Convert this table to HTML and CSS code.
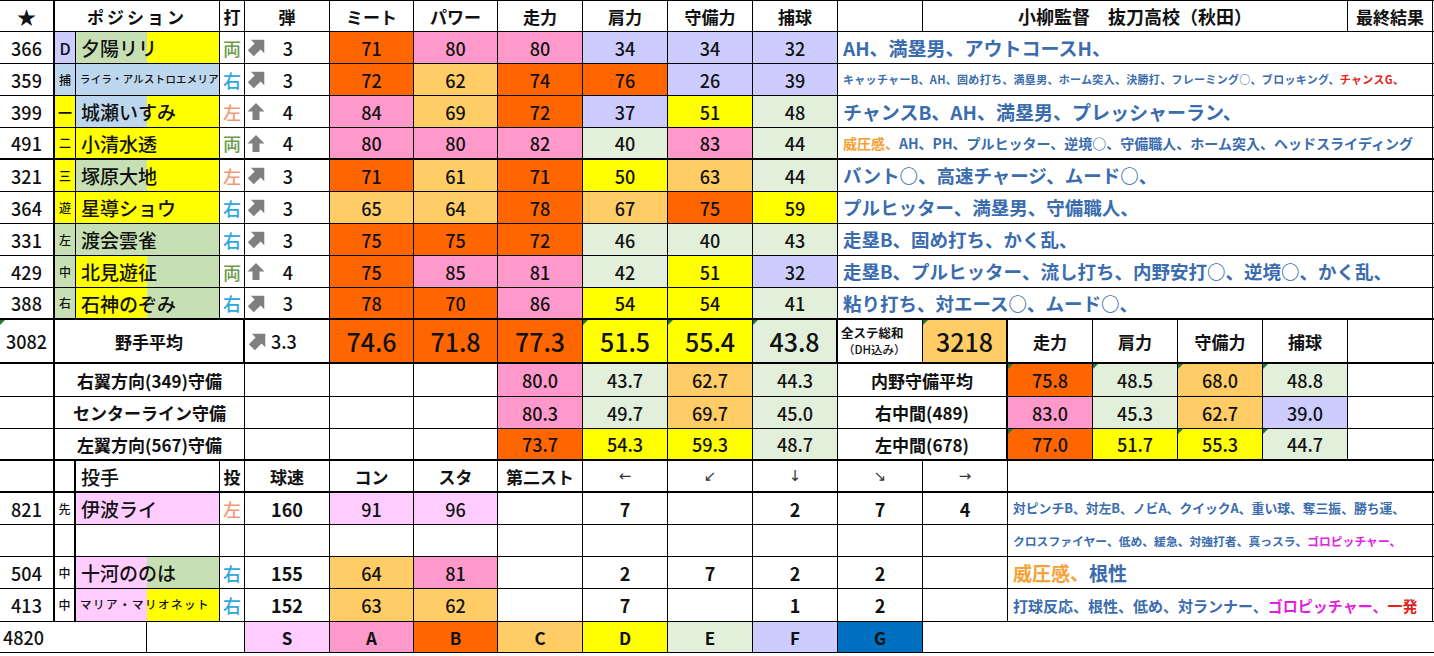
FILE: index.html
```html
<!DOCTYPE html>
<html lang="ja">
<head>
<meta charset="utf-8">
<title>小柳監督 抜刀高校（秋田）</title>
<link rel="stylesheet" href="styles.css">
</head>
<body>
<div class="tbl">
  <!-- header -->
  <div class="r hd">
    <div class="c k1 h star">★</div>
    <div class="c s3 h sp">ポジション</div>
    <div class="c h">打</div>
    <div class="c h">弾</div>
    <div class="c h">ミート</div>
    <div class="c h">パワー</div>
    <div class="c h">走力</div>
    <div class="c h">肩力</div>
    <div class="c h">守備力</div>
    <div class="c h">捕球</div>
    <div class="c"></div>
    <div class="c s5 h title">小柳監督　抜刀高校（秋田）</div>
    <div class="c h">最終結果</div>
  </div>

  <div class="r">
    <div class="c k1 no">366</div>
    <div class="c bf ps pl">D</div>
    <div class="c s2 nm n-gy">夕陽リリ</div>
    <div class="c da ryo">両</div>
    <div class="c dan"><svg class="ar" viewBox="0 2 18 18"><path d="M10 1 L19 10 L14 10 L14 19 L6 19 L6 10 L1 10 Z" transform="rotate(45 10 10)"/></svg><span>3</span></div>
    <div class="c v bo">71</div><div class="c v bp">80</div><div class="c v bp">80</div><div class="c v bf">34</div><div class="c v bf">34</div><div class="c v bf">32</div>
    <div class="c s7 ab a19">AH、満塁男、アウトコースH、</div>
  </div>

  <div class="r">
    <div class="c k1 no">359</div>
    <div class="c bb ps">捕</div>
    <div class="c s2 nm sm n-bb">ライラ・アルストロエメリア</div>
    <div class="c da migi">右</div>
    <div class="c dan"><svg class="ar" viewBox="0 2 18 18"><path d="M10 1 L19 10 L14 10 L14 19 L6 19 L6 10 L1 10 Z" transform="rotate(45 10 10)"/></svg><span>3</span></div>
    <div class="c v bo">72</div><div class="c v bc">62</div><div class="c v bo">74</div><div class="c v bo">76</div><div class="c v bf">26</div><div class="c v bf">39</div>
    <div class="c s7 ab a11">キャッチャーB、AH、固め打ち、満塁男、ホーム突入、決勝打、フレーミング○、ブロッキング、<span class="red">チャンスG、</span></div>
  </div>

  <div class="r">
    <div class="c k1 no">399</div>
    <div class="c by ps pl">ー</div>
    <div class="c s2 nm n-by">城瀬いすみ</div>
    <div class="c da hidari">左</div>
    <div class="c dan"><svg class="ar up" viewBox="0 0 18 19"><path d="M9 1 L17.5 9.5 L12.5 9.5 L12.5 18 L5.5 18 L5.5 9.5 L0.5 9.5 Z"/></svg><span>4</span></div>
    <div class="c v bp">84</div><div class="c v bc">69</div><div class="c v bo">72</div><div class="c v bf">37</div><div class="c v by">51</div><div class="c v be">48</div>
    <div class="c s7 ab a19">チャンスB、AH、満塁男、プレッシャーラン、</div>
  </div>

  <div class="r tb">
    <div class="c k1 no">491</div>
    <div class="c by ps">二</div>
    <div class="c s2 nm n-yy">小清水透</div>
    <div class="c da ryo">両</div>
    <div class="c dan"><svg class="ar up" viewBox="0 0 18 19"><path d="M9 1 L17.5 9.5 L12.5 9.5 L12.5 18 L5.5 18 L5.5 9.5 L0.5 9.5 Z"/></svg><span>4</span></div>
    <div class="c v bp">80</div><div class="c v bp">80</div><div class="c v bp">82</div><div class="c v be">40</div><div class="c v bp">83</div><div class="c v be">44</div>
    <div class="c s7 ab a14"><span class="org">威圧感、</span>AH、PH、プルヒッター、逆境○、守備職人、ホーム突入、ヘッドスライディング</div>
  </div>

  <div class="r">
    <div class="c k1 no">321</div>
    <div class="c by ps">三</div>
    <div class="c s2 nm n-gy">塚原大地</div>
    <div class="c da hidari">左</div>
    <div class="c dan"><svg class="ar" viewBox="0 2 18 18"><path d="M10 1 L19 10 L14 10 L14 19 L6 19 L6 10 L1 10 Z" transform="rotate(45 10 10)"/></svg><span>3</span></div>
    <div class="c v bo">71</div><div class="c v bc">61</div><div class="c v bo">71</div><div class="c v by">50</div><div class="c v bc">63</div><div class="c v be">44</div>
    <div class="c s7 ab a18">バント○、高速チャージ、ムード○、</div>
  </div>

  <div class="r">
    <div class="c k1 no">364</div>
    <div class="c by ps">遊</div>
    <div class="c s2 nm n-yy">星導ショウ</div>
    <div class="c da migi">右</div>
    <div class="c dan"><svg class="ar" viewBox="0 2 18 18"><path d="M10 1 L19 10 L14 10 L14 19 L6 19 L6 10 L1 10 Z" transform="rotate(45 10 10)"/></svg><span>3</span></div>
    <div class="c v bc">65</div><div class="c v bc">64</div><div class="c v bo">78</div><div class="c v bc">67</div><div class="c v bo">75</div><div class="c v by">59</div>
    <div class="c s7 ab a18">プルヒッター、満塁男、守備職人、</div>
  </div>

  <div class="r">
    <div class="c k1 no">331</div>
    <div class="c bn ps">左</div>
    <div class="c s2 nm n-gg">渡会雲雀</div>
    <div class="c da migi">右</div>
    <div class="c dan"><svg class="ar" viewBox="0 2 18 18"><path d="M10 1 L19 10 L14 10 L14 19 L6 19 L6 10 L1 10 Z" transform="rotate(45 10 10)"/></svg><span>3</span></div>
    <div class="c v bo">75</div><div class="c v bo">75</div><div class="c v bo">72</div><div class="c v be">46</div><div class="c v be">40</div><div class="c v be">43</div>
    <div class="c s7 ab a18">走塁B、固め打ち、かく乱、</div>
  </div>

  <div class="r">
    <div class="c k1 no">429</div>
    <div class="c bn ps">中</div>
    <div class="c s2 nm n-yg">北見遊征</div>
    <div class="c da ryo">両</div>
    <div class="c dan"><svg class="ar up" viewBox="0 0 18 19"><path d="M9 1 L17.5 9.5 L12.5 9.5 L12.5 18 L5.5 18 L5.5 9.5 L0.5 9.5 Z"/></svg><span>4</span></div>
    <div class="c v bo">75</div><div class="c v bp">85</div><div class="c v bp">81</div><div class="c v be">42</div><div class="c v by">51</div><div class="c v bf">32</div>
    <div class="c s7 ab a18">走塁B、プルヒッター、流し打ち、内野安打○、逆境○、かく乱、</div>
  </div>

  <div class="r tb">
    <div class="c k1 no">388</div>
    <div class="c bn ps">右</div>
    <div class="c s2 nm n-yg">石神のぞみ</div>
    <div class="c da migi">右</div>
    <div class="c dan"><svg class="ar" viewBox="0 2 18 18"><path d="M10 1 L19 10 L14 10 L14 19 L6 19 L6 10 L1 10 Z" transform="rotate(45 10 10)"/></svg><span>3</span></div>
    <div class="c v bo">78</div><div class="c v bo">70</div><div class="c v bp">86</div><div class="c v by">54</div><div class="c v by">54</div><div class="c v be">41</div>
    <div class="c s7 ab a18">粘り打ち、対エース○、ムード○、</div>
  </div>

  <!-- averages -->
  <div class="r tall tb">
    <div class="c k1 no tri">3082</div>
    <div class="c s4 h kr">野手平均</div>
    <div class="c avg"><svg class="ar" viewBox="0 2 18 18"><path d="M10 1 L19 10 L14 10 L14 19 L6 19 L6 10 L1 10 Z" transform="rotate(45 10 10)"/></svg><span>3.3</span></div>
    <div class="c big bo">74.6</div><div class="c big bo">71.8</div><div class="c big bo">77.3</div><div class="c big by tri">51.5</div><div class="c big by tri">55.4</div><div class="c big be tri kr">43.8</div>
    <div class="c tot"><span class="t1">全ステ総和</span><span class="t2">（DH込み）</span></div>
    <div class="c big bc tri kr">3218</div>
    <div class="c h">走力</div>
    <div class="c h">肩力</div>
    <div class="c h">守備力</div>
    <div class="c h">捕球</div>
    <div class="c"></div>
  </div>

  <div class="r r33">
    <div class="c k1"></div>
    <div class="c s4 h">右翼方向(349)守備</div>
    <div class="c"></div><div class="c"></div><div class="c"></div>
    <div class="c v bp">80.0</div><div class="c v be">43.7</div><div class="c v bc">62.7</div><div class="c v be">44.3</div>
    <div class="c s2 h kr">内野守備平均</div>
    <div class="c v bo tri">75.8</div><div class="c v be tri">48.5</div><div class="c v bc tri">68.0</div><div class="c v be tri">48.8</div>
    <div class="c"></div>
  </div>

  <div class="r">
    <div class="c k1"></div>
    <div class="c s4 h">センターライン守備</div>
    <div class="c"></div><div class="c"></div><div class="c"></div>
    <div class="c v bp">80.3</div><div class="c v be">49.7</div><div class="c v bc">69.7</div><div class="c v be">45.0</div>
    <div class="c s2 h kr">右中間(489)</div>
    <div class="c v bp">83.0</div><div class="c v be">45.3</div><div class="c v bc">62.7</div><div class="c v bf">39.0</div>
    <div class="c"></div>
  </div>

  <div class="r tb">
    <div class="c k1"></div>
    <div class="c s4 h">左翼方向(567)守備</div>
    <div class="c"></div><div class="c"></div><div class="c"></div>
    <div class="c v bo">73.7</div><div class="c v by">54.3</div><div class="c v by">59.3</div><div class="c v be">48.7</div>
    <div class="c s2 h kr">左中間(678)</div>
    <div class="c v bo tri">77.0</div><div class="c v by">51.7</div><div class="c v by tri">55.3</div><div class="c v be tri">44.7</div>
    <div class="c"></div>
  </div>

  <!-- pitchers -->
  <div class="r tb">
    <div class="c k1"></div>
    <div class="c k2"></div>
    <div class="c s2 h nm">投手</div>
    <div class="c h">投</div>
    <div class="c h">球速</div>
    <div class="c h">コン</div>
    <div class="c h">スタ</div>
    <div class="c h">第二スト</div>
    <div class="c arw">&#x2190;&#xFE0E;</div>
    <div class="c arw">&#x2199;&#xFE0E;</div>
    <div class="c arw">&#x2193;&#xFE0E;</div>
    <div class="c arw">&#x2198;&#xFE0E;</div>
    <div class="c arw">&#x2192;&#xFE0E;</div>
    <div class="c s5"></div>
  </div>

  <div class="r">
    <div class="c k1 no">821</div>
    <div class="c k2 ps">先</div>
    <div class="c s2 nm n-pp">伊波ライ</div>
    <div class="c da hidari">左</div>
    <div class="c v pv">160</div>
    <div class="c v bs">91</div><div class="c v bs">96</div>
    <div class="c"></div>
    <div class="c v pv">7</div><div class="c"></div><div class="c v pv">2</div><div class="c v pv">7</div><div class="c v pv">4</div>
    <div class="c s5 ab a13">対ピンチB、対左B、ノビA、クイックA、重い球、奪三振、勝ち運、</div>
  </div>

  <div class="r">
    <div class="c k1"></div>
    <div class="c k2"></div>
    <div class="c s2"></div>
    <div class="c"></div><div class="c"></div><div class="c"></div><div class="c"></div><div class="c"></div>
    <div class="c"></div><div class="c"></div><div class="c"></div><div class="c"></div><div class="c"></div>
    <div class="c s5 ab a12">クロスファイヤー、低め、緩急、対強打者、真っスラ、<span class="mag">ゴロピッチャー、</span></div>
  </div>

  <div class="r">
    <div class="c k1 no">504</div>
    <div class="c k2 ps">中</div>
    <div class="c s2 nm n-pg">十河ののは</div>
    <div class="c da migi">右</div>
    <div class="c v pv">155</div>
    <div class="c v bc">64</div><div class="c v bp">81</div>
    <div class="c"></div>
    <div class="c v pv">2</div><div class="c v pv">7</div><div class="c v pv">2</div><div class="c v pv">2</div><div class="c"></div>
    <div class="c s5 ab a19"><span class="org">威圧感、</span>根性</div>
  </div>

  <div class="r r33">
    <div class="c k1 no">413</div>
    <div class="c k2 ps">中</div>
    <div class="c s2 nm sm2 n-py">マリア・マリオネット</div>
    <div class="c da migi">右</div>
    <div class="c v pv">152</div>
    <div class="c v bc">63</div><div class="c v bc">62</div>
    <div class="c"></div>
    <div class="c v pv">7</div><div class="c"></div><div class="c v pv">1</div><div class="c v pv">2</div><div class="c"></div>
    <div class="c s5 ab a15">打球反応、根性、低め、対ランナー、<span class="mag">ゴロピッチャー、</span><span class="red">一発</span></div>
  </div>

  <!-- legend -->
  <div class="r r31">
    <div class="c s3 no lft">4820</div>
    <div class="c s2"></div>
    <div class="c h bs">S</div>
    <div class="c h bp">A</div>
    <div class="c h bo">B</div>
    <div class="c h bc">C</div>
    <div class="c h by">D</div>
    <div class="c h be">E</div>
    <div class="c h bf">F</div>
    <div class="c h bg">G</div>
    <div class="c s6 nob"></div>
  </div>
</div>
</body>
</html>
```

FILE: styles.css
```css
html, body {
  margin: 0;
  padding: 0;
  background: #ffffff;
}

.tbl {
  width: 1434px;
  border-top: 1px solid #000;
  font-family: "Noto Sans CJK JP", "Noto Sans", sans-serif;
  color: #111;
}

.r {
  display: grid;
  grid-template-columns: 55px 21px 71px 73px 25px 85px 84px 84px 85px 85px 85px 85px 85px 85px 85px 85px 85px 85px 85px;
  height: 32px;
  box-sizing: border-box;
  border-bottom: 1px solid #000;
}

.r.hd { height: 31px; }
.r.tb { border-bottom-width: 2px; }
.r.tall { height: 44px; }
.r.r33 { height: 33px; }
.r.r31 { height: 31px; }

.c {
  box-sizing: border-box;
  border-right: 1px solid #000;
  display: flex;
  align-items: center;
  justify-content: center;
  white-space: nowrap;
  overflow: hidden;
  position: relative;
  font-size: 18px;
  line-height: 1;
}

.s2 { grid-column: span 2; }
.s3 { grid-column: span 3; }
.s4 { grid-column: span 4; }
.s5 { grid-column: span 5; }
.s6 { grid-column: span 6; }
.s7 { grid-column: span 7; }

.k1 { border-right-width: 2px; }
.k2 { border-right-width: 2px; }
.kr { border-right-width: 2px; }
.nob { border-right: none; }

.h { font-weight: 700; font-size: 17px; }
.star { font-size: 19px; }
.sp { letter-spacing: 3px; }
.title { font-size: 18px; }

.no { font-size: 18px; font-weight: 500; }
.lft { justify-content: flex-start; padding-left: 3px; }
.v { font-weight: 500; font-size: 18px; }
.pv { font-weight: 700; font-size: 18px; }
.big { font-size: 25px; font-weight: 500; }

/* position col */
.ps { font-size: 12px; font-weight: 500; }
.ps.pl { font-size: 16px; }

/* name cells */
.nm {
  justify-content: flex-start;
  padding-left: 5px;
  font-size: 19px;
  font-weight: 500;
}
.nm.sm { font-size: 10.4px; padding-left: 4px; letter-spacing: 0.3px; }
.nm.sm2 { font-size: 11.5px; padding-left: 4px; letter-spacing: 1.5px; }

/* 打 */
.da { font-size: 18px; font-weight: 500; }
.ryo { color: #6e9a4e; }
.migi { color: #2ea6de; }
.hidari { color: #f29a78; }

/* 弾 */
.dan {
  display: grid;
  grid-template-columns: 22px 1fr 20px;
  align-items: center;
  justify-items: center;
}
.ar {
  width: 19px;
  height: 19px;
  fill: #7f7f7f;
  justify-self: start;
  margin-left: 2px;
}
.ar.up { width: 18px; height: 19px; }
.dan span { font-size: 18px; font-weight: 500; }

.avg {
  justify-content: flex-start;
  padding-left: 3px;
  gap: 4px;
  font-size: 18px;
  font-weight: 500;
}
.avg .ar { margin-left: 0; }

.tot {
  flex-direction: column;
  align-items: flex-start;
  padding-left: 3px;
  gap: 4px;
}
.t1 { font-size: 12.5px; font-weight: 700; }
.t2 { font-size: 11.5px; font-weight: 500; padding-left: 2px; }

.arw {
  font-family: "DejaVu Sans", sans-serif;
  font-size: 15px;
  color: #333;
  font-weight: 400;
}

/* abilities */
.ab {
  justify-content: flex-start;
  padding-left: 5px;
  color: #3a6cae;
  font-weight: 700;
}
.a19 { font-size: 19px; }
.a18 { font-size: 18.5px; }
.a15 { font-size: 15px; }
.a14 { font-size: 14px; }
.a13 { font-size: 12.8px; }
.a12 { font-size: 11.8px; }
.a11 { font-size: 11px; letter-spacing: 0.3px; }
.org { color: #f5a135; }
.mag { color: #e21ee0; }
.red { color: #e2231a; }

/* colour scale */
.bs { background: #ffccff; }
.bp { background: #ff99cc; }
.bo { background: #ff6600; }
.bc { background: #ffcc66; }
.by { background: #ffff00; }
.be { background: #e2efda; }
.bf { background: #ccccff; }
.bg { background: #0070c0; }
.bb { background: #bdd7ee; }
.bn { background: #c6e0b4; }

.n-gy { background: linear-gradient(90deg, #c6e0b4 71px, #ffff00 71px); }
.n-bb { background: #bdd7ee; }
.n-by { background: linear-gradient(90deg, #bdd7ee 71px, #ffff00 71px); }
.n-yy { background: #ffff00; }
.n-gg { background: #c6e0b4; }
.n-yg { background: linear-gradient(90deg, #ffff00 71px, #c6e0b4 71px); }
.n-pp { background: #ffccff; }
.n-pg { background: linear-gradient(90deg, #ffccff 71px, #c6e0b4 71px); }
.n-py { background: linear-gradient(90deg, #ffccff 71px, #ffff00 71px); }

/* excel indicator triangles */
.tri::before {
  content: "";
  position: absolute;
  left: 0;
  top: 0;
  border-top: 5px solid #1e7a38;
  border-right: 5px solid transparent;
}
```
